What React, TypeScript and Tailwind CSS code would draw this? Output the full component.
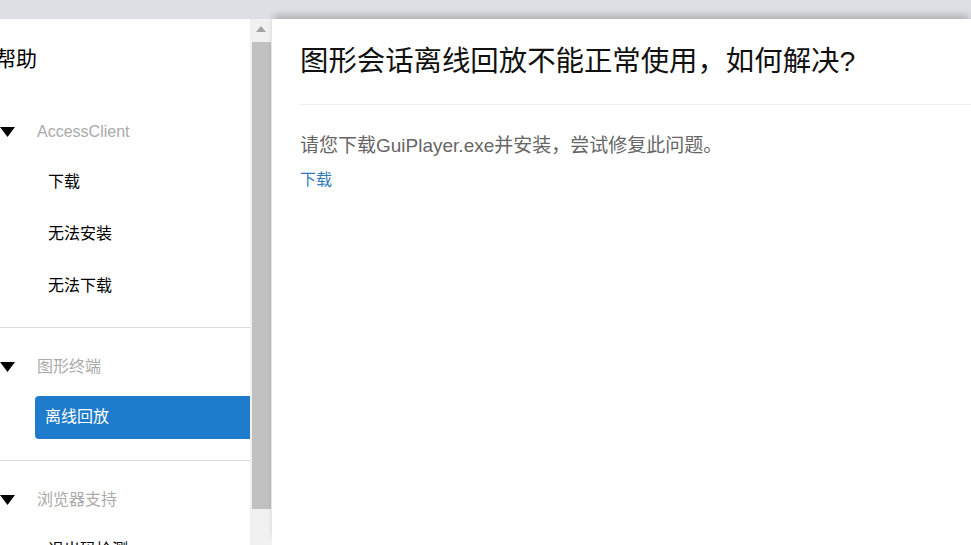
const font = 'font-["Liberation_Sans","Noto_Sans_CJK_SC",sans-serif]';

type Group = { title: string; items: string[]; active?: string };

const groups: Group[] = [
  { title: 'AccessClient', items: ['下载', '无法安装', '无法下载'] },
  { title: '图形终端', items: ['离线回放'], active: '离线回放' },
  { title: '浏览器支持', items: ['退出码检测'] },
];

function Caret() {
  return (
    <svg width="15" height="10" viewBox="0 0 15 10" className="shrink-0">
      <path d="M0 0 H15 L7.5 10 Z" fill="#000" />
    </svg>
  );
}

function NavGroup({ group, last, pb }: { group: Group; last: boolean; pb: string }) {
  return (
    <div className={`pt-[15px] ${last ? '' : `${pb} border-b border-[#dddddd]`}`}>
      <div className="h-[48px] flex items-center">
        <Caret />
        <span className="ml-[22px] text-[16px] text-[#aaaaaa]">{group.title}</span>
      </div>
      {group.items.map((item) =>
        item === group.active ? (
          <div key={item} className="h-[52px] flex items-center pl-[35px]">
            <div className="h-[43px] w-full flex items-center px-[10px] rounded-l-[4px] bg-[#1f7bcc] text-white text-[16px]">
              {item}
            </div>
          </div>
        ) : (
          <div key={item} className="h-[52px] flex items-center pl-[48px] text-[16px] text-black">
            {item}
          </div>
        ),
      )}
    </div>
  );
}

export default function App() {
  return (
    <div className={`w-[971px] h-[545px] overflow-hidden bg-white flex flex-col ${font}`}>
      <div className="h-[19px] shrink-0 bg-[#dcdfe3]" />
      <div className="flex flex-1 min-h-0">
        <aside className="w-[250px] shrink-0 overflow-hidden">
          <div className="h-[74px] pt-[6px] flex items-center -ml-[5px] text-[21px] text-black">帮助</div>
          {groups.map((g, i) => (
            <NavGroup
              key={g.title}
              group={g}
              last={i === groups.length - 1}
              pb={i === 0 ? 'pb-[15px]' : 'pb-[17px]'}
            />
          ))}
        </aside>

        <div className="w-[22px] shrink-0 bg-[#f1f1f1] flex flex-col">
          <div className="h-[23px] flex items-center justify-center pb-[4px]">
            <svg width="10" height="6" viewBox="0 0 10 6">
              <path d="M5 0 L10 6 H0 Z" fill="#a3a3a3" />
            </svg>
          </div>
          <div className="ml-[2px] w-[19px] h-[467px] bg-[#c1c1c1]" />
        </div>

        <main className="relative z-10 flex-1 bg-white pl-[28px] shadow-[0_-6px_7px_-2px_rgba(0,0,0,0.2)]">
          <div className="pt-[22px] pb-[23px] border-b border-[#eeeeee]">
            <h1 className="text-[28.4px] leading-[40px] text-[#111111] whitespace-nowrap">
              图形会话离线回放不能正常使用，如何解决?
            </h1>
          </div>
          <p className="mt-[28px] text-[19px] leading-[26px] text-[#666666] whitespace-nowrap">
            请您下载GuiPlayer.exe并安装，尝试修复此问题。
          </p>
          <a href="#" className="block mt-[10px] text-[16px] leading-[22px] text-[#337ab7]">
            下载
          </a>
        </main>
      </div>
    </div>
  );
}
